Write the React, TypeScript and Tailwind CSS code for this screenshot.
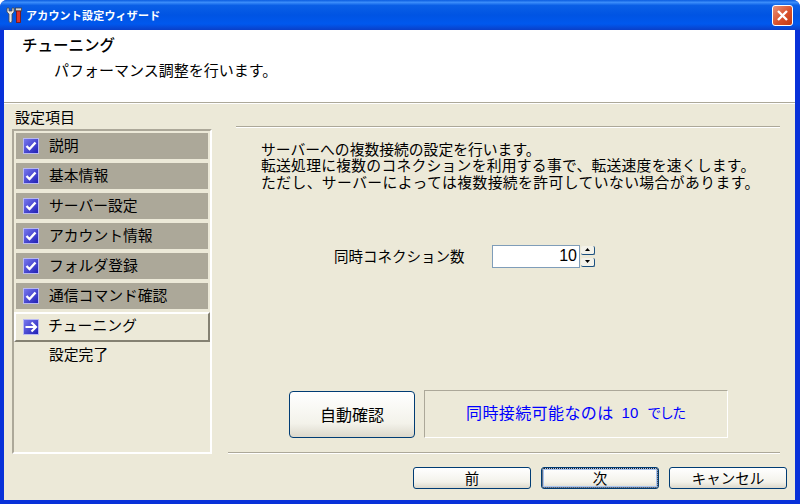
import { type FC } from "react";

const steps = ["説明", "基本情報", "サーバー設定", "アカウント情報", "フォルダ登録", "通信コマンド確認"];

const BoxIcon: FC<{ kind: "check" | "arrow" }> = ({ kind }) => {
  return (
    <svg width="16" height="16" viewBox="0 0 16 16" className="shrink-0">
      <defs>
        <linearGradient id={`box-${kind}`} x1="0" y1="0" x2="1" y2="1">
          <stop offset="0" stopColor="#7b7bf0" />
          <stop offset="1" stopColor="#1c1cb4" />
        </linearGradient>
      </defs>
      <rect x="0.5" y="0.5" width="15" height="15" fill={`url(#box-${kind})`} stroke="#b9b9f2" />
      {kind === "check" ? (
        <path d="M3.5 8 L6.5 11 L12.5 4.5" fill="none" stroke="#fff" strokeWidth="2.4" />
      ) : (
        <path d="M2.5 8 H12 M8.5 3.5 L13 8 L8.5 12.5" fill="none" stroke="#fff" strokeWidth="2.2" />
      )}
    </svg>
  );
};

const ToolsIcon: FC = () => {
  return (
    <svg width="16" height="16" viewBox="0 0 16 16" className="shrink-0">
      <path d="M1 1 V5 L3 7 V14 Q3 15.5 4.5 15.5 Q6 15.5 6 14 V7 L8 5 V1 L6 1 V4 H3 V1 Z" fill="#e4e4e4" stroke="#4a4a4a" strokeWidth="0.8" />
      <rect x="9.5" y="1" width="6" height="3" fill="#d8d8d8" stroke="#444" strokeWidth="0.8" />
      <rect x="10.5" y="4" width="4" height="11.5" fill="#e0352c" stroke="#7a1410" strokeWidth="0.8" />
    </svg>
  );
};

const CloseButton: FC = () => {
  return (
    <div className="flex h-[21px] w-[21px] items-center justify-center rounded-[3px] border border-white bg-[linear-gradient(135deg,#e8927a,#d9512c_55%,#c23a12)]">
      <svg width="13" height="13" viewBox="0 0 13 13">
        <path d="M2 2 L11 11 M11 2 L2 11" stroke="#fff" strokeWidth="2.4" />
      </svg>
    </div>
  );
};

const XpButton: FC<{ label: string; focused?: boolean }> = ({ label, focused }) => {
  return (
    <button
      className={`flex h-[22px] w-[118px] items-center justify-center rounded-[3px] border border-[#003c74] bg-[linear-gradient(180deg,#ffffff,#f3f2ea_70%,#dcd8cb)] text-[14.5px] leading-none text-black ${
        focused ? "shadow-[inset_0_0_0_2px_#a9c4ee] outline outline-dotted outline-[#222] -outline-offset-2" : ""
      }`}
    >
      {label}
    </button>
  );
};

const SpinButton: FC<{ up?: boolean }> = ({ up }) => {
  return (
    <div className="flex h-[9px] w-[14px] items-center justify-center rounded-[2px] border-r border-b border-[#1c5180] bg-[#f3f2ea]">
      <svg width="5" height="3" viewBox="0 0 5 3">
        <path d={up ? "M2.5 0 L5 3 H0 Z" : "M0 0 H5 L2.5 3 Z"} fill="#000" />
      </svg>
    </div>
  );
};

const App: FC = () => {
  return (
    <div className="flex h-[504px] w-[800px] flex-col overflow-hidden rounded-t-[7px] bg-[#0831d9] font-['Noto_Sans_CJK_JP','Noto_Sans',sans-serif] text-black">
      {/* title bar */}
      <div className="flex h-[30px] shrink-0 items-center bg-[linear-gradient(180deg,#0a5ce0_0%,#3b8dfa_8%,#0a5fe6_18%,#0054e3_50%,#0058ee_80%,#0a3fc8_100%)] pl-[6px] pr-[7px]">
        <ToolsIcon />
        <span className="ml-[4px] flex-1 text-[11px] font-bold tracking-[0.2px] text-white">
          アカウント設定ウィザード
        </span>
        <CloseButton />
      </div>

      <div className="ml-[4px] mr-[5px] flex flex-1 flex-col bg-[#ece9d8]">
        {/* header */}
        <div className="h-[73px] shrink-0 border-b border-[#aca899] bg-white pl-[18px] pt-[4px]">
          <div className="text-[15.5px] font-medium leading-[20px]">チューニング</div>
          <div className="ml-[32px] mt-[6px] text-[15px] leading-[20px]">パフォーマンス調整を行います。</div>
        </div>

        <div className="flex flex-1 border-t border-white">
          {/* left column */}
          <div className="ml-[8px] w-[200px] shrink-0">
            <div className="ml-[3px] mt-[3px] text-[15px] leading-[20px]">設定項目</div>
            <div className="mt-[2px] h-[325px] border-2 border-[#aca899] border-b-white border-r-white pt-[2px]">
              <div className="flex flex-col gap-[4px]">
                {steps.map((step) => {
                  return (
                    <div key={step} className="mx-[2px] flex h-[26px] items-center bg-[#aca899] pl-[7px]">
                      <BoxIcon kind="check" />
                      <span className="ml-[10px] pb-[2px] text-[14.8px] leading-none">{step}</span>
                    </div>
                  );
                })}
              </div>
              <div className="mt-[3px] flex h-[30px] items-center border-2 border-white border-b-[#848172] border-r-[#848172] pl-[7px]">
                <BoxIcon kind="arrow" />
                <span className="ml-[9px] pb-[3px] text-[14.8px] leading-none">チューニング</span>
              </div>
              <div className="flex h-[26px] items-center pb-[2px] pl-[35px] text-[14.8px] leading-none">設定完了</div>
            </div>
          </div>

          {/* right column */}
          <div className="ml-[16px] flex flex-1 flex-col">
            <div className="ml-[8px] mt-[22px] h-[2px] w-[544px] border-t border-[#aca899] bg-white" />
            <div className="ml-[33px] mt-[13px] text-[14.8px] leading-[16.3px]">
              <div>サーバーへの複数接続の設定を行います。</div>
              <div className="tracking-[0.25px]">転送処理に複数のコネクションを利用する事で、転送速度を速くします。</div>
              <div className="tracking-[0.42px]">ただし、サーバーによっては複数接続を許可していない場合があります。</div>
            </div>

            <div className="ml-[106px] mt-[55px] flex items-center">
              <span className="w-[158px] pb-[1px] text-[14.5px] leading-none">同時コネクション数</span>
              <div className="flex h-[23px] w-[88px] items-center justify-end border border-[#7f9db9] bg-white pr-[2px] font-['Liberation_Sans',sans-serif] text-[16px] leading-none">
                10
              </div>
              <div className="ml-px flex flex-col gap-[3px]">
                <SpinButton up />
                <SpinButton />
              </div>
            </div>

            <div className="ml-[61px] mt-[122px] flex items-start">
              <button className="mt-px h-[47px] w-[126px] rounded-[4px] border border-[#003c74] bg-[linear-gradient(180deg,#ffffff,#f3f2ea_70%,#dcd8cb)] text-[16px] leading-none">
                自動確認
              </button>
              <div className="ml-[9px] flex h-[48px] w-[304px] items-center border border-[#aca899] border-b-white border-r-white pb-[3px] pl-[41px] text-[16px] leading-none text-[#0000ff]">
                <span className="tracking-[0.4px]">同時接続可能なのは</span>
                <span className="ml-[8px] mr-[9px] font-['Liberation_Sans',sans-serif] text-[15px]">10</span>
                <span className="text-[14px] tracking-[-1.5px]">でした</span>
              </div>
            </div>

            <div className="mt-[14px] h-[2px] w-[552px] border-t border-[#aca899] bg-white" />

            <div className="ml-[185px] mt-[13px] flex gap-[10px]">
              <XpButton label="前" />
              <XpButton label="次" focused />
              <XpButton label="キャンセル" />
            </div>
          </div>
        </div>
      </div>
      <div className="h-[4px] shrink-0" />
    </div>
  );
};

export default App;
